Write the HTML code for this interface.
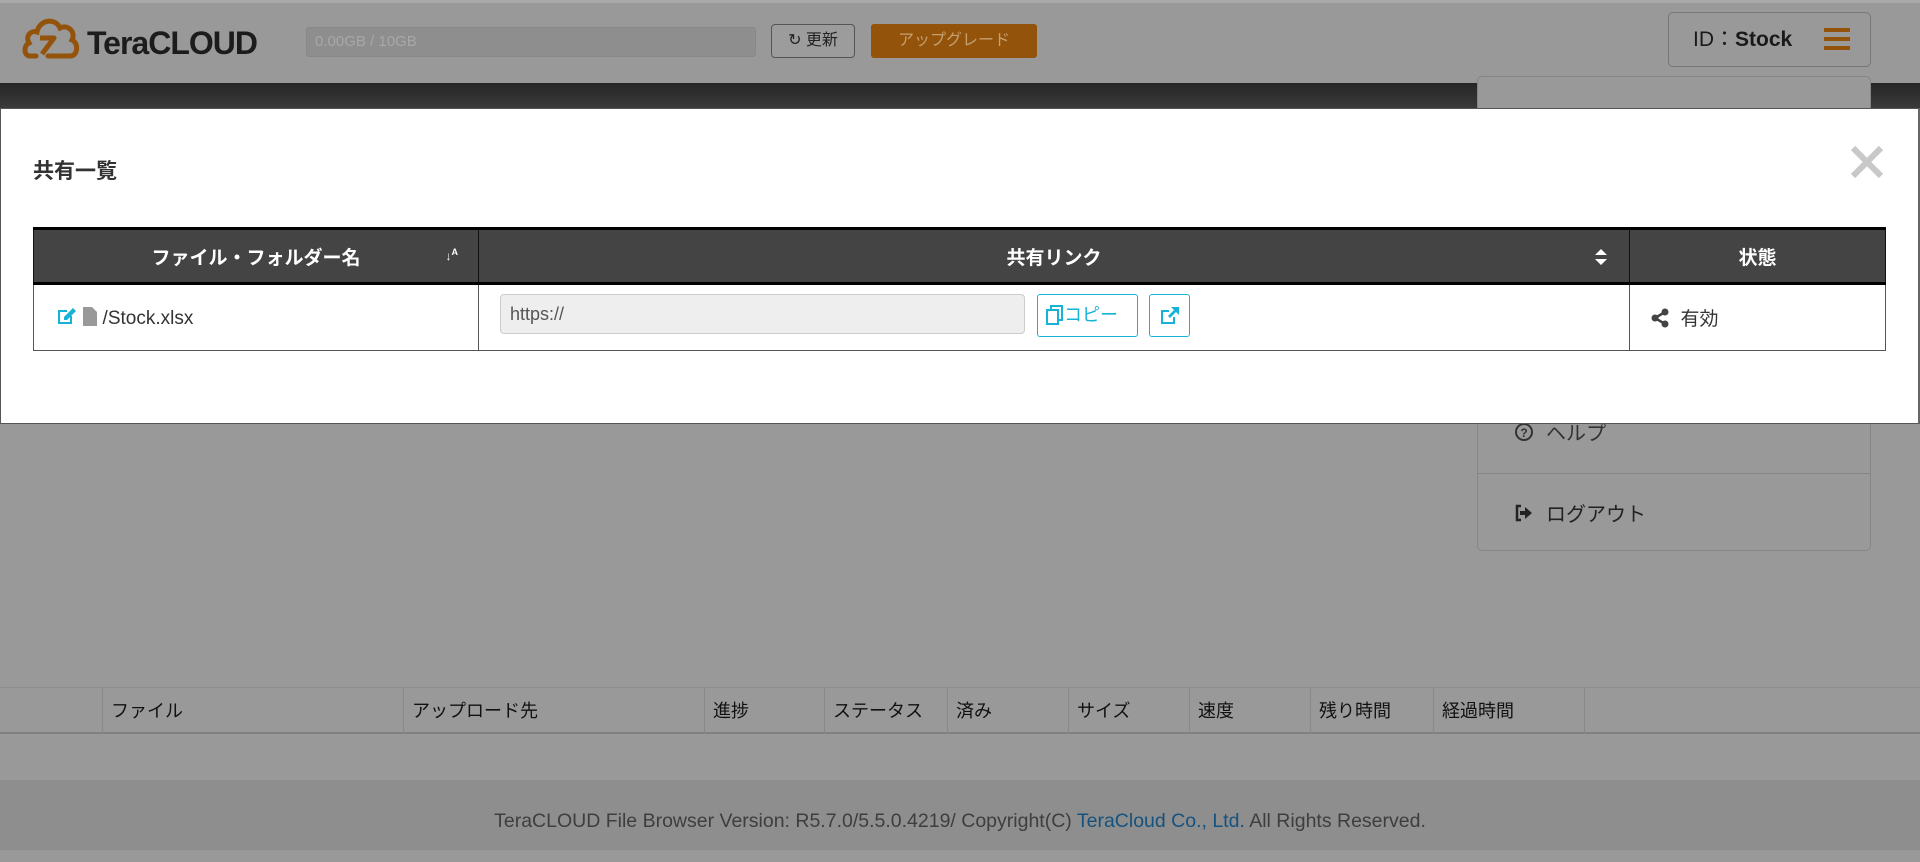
<!DOCTYPE html>
<html><head><meta charset="utf-8"><style>
*{box-sizing:border-box;margin:0;padding:0}
body{width:1920px;height:850px;overflow:hidden;background:#999;font-family:"Liberation Sans","Noto Sans CJK JP",sans-serif;position:relative;color:#222}
.abs{position:absolute}
.hdr{left:0;top:0;width:1920px;height:83px;background:#999;border-top:3px solid #aaa}
.tb{left:0;top:83px;width:1920px;height:25px;background:linear-gradient(#262626,#3a3a3a)}
.bar{left:306px;top:27px;width:450px;height:30px;background:#8e8e8e;border:1px solid #888;border-radius:3px;color:#a8a8a8;font-size:15px;line-height:28px;padding-left:8px}
.btn1{left:771px;top:24px;width:84px;height:34px;border:1px solid #555;border-radius:4px;background:#9c9c9c;font-size:16px;line-height:32px;text-align:center;color:#222}
.up{left:871px;top:24px;width:166px;height:34px;background:#94530a;border-radius:3px;color:#c4a070;font-size:16px;line-height:34px;text-align:center}
.id{left:1668px;top:12px;width:203px;height:55px;border:1px solid #777;border-radius:5px;font-size:21px;line-height:53px;padding-left:24px;color:#1a1a1a}
.menu{left:1477px;top:76px;width:394px;height:475px;border:1px solid #858585;border-radius:5px;background:#999}
.modal{left:0;top:108px;width:1920px;height:316px;background:#fff;border:1px solid #555;border-right:2px solid #666}
table{position:absolute;left:33px;top:227px;width:1853px;border-collapse:collapse;font-size:19px}
th{background:#444;color:#fff;height:55px;border:1px solid #111;border-top:3px solid #000;border-bottom:3px solid #000;font-weight:bold;position:relative}
td{height:67px;border:1px solid #555;vertical-align:middle}
.cb{border:1px solid #17b3d6;border-radius:3px;color:#17b3d6;height:43px;position:absolute;top:294px;background:#fff}
.ul{left:0;top:687px;width:1920px;height:47px;border-top:1px solid #8e8e8e;border-bottom:2px solid #808080;font-size:18px;color:#111}
.ul span{position:absolute;top:0;height:46px;line-height:46px;border-left:1px solid #888;padding-left:8px}
.ft{left:0;top:780px;width:1920px;height:70px;background:#8e8e8e;text-align:center;font-size:19.5px;line-height:82px;color:#3e3e3e}
</style></head><body>
<div class="abs hdr"></div>
<svg class="abs" style="left:22px;top:12px" width="60" height="50" viewBox="0 0 60 50"><path d="M14 44 H8 C2 44 1 34 7 31 C3 24 9 18 15 20 C17 8 33 5 38 16 C46 12 54 20 50 28 C57 31 56 44 48 44 H26" fill="none" stroke="#94530a" stroke-width="5" stroke-linecap="round"/><path d="M18 26 H32 L20 42" fill="none" stroke="#94530a" stroke-width="5" stroke-linejoin="round"/></svg>
<div class="abs" style="left:87px;top:25px;font-size:32px;font-weight:bold;color:#1c1c1c;letter-spacing:-1px">TeraCLOUD</div>
<div class="abs bar">0.00GB / 10GB</div>
<div class="abs btn1">&#x21bb; 更新</div>
<div class="abs up">アップグレード</div>
<div class="abs id">ID：<b>Stock</b><span style="position:absolute;left:155px;top:15px;width:26px;height:22px;border-top:4px solid #94530a;border-bottom:4px solid #94530a"><span style="position:absolute;top:5px;left:0;width:26px;height:4px;background:#94530a"></span></span></div>
<div class="abs tb"></div>
<div class="abs menu">
<div style="position:absolute;left:0;top:396px;width:392px;border-top:1px solid #858585"></div>
<svg style="position:absolute;left:36px;top:345px" width="20" height="20" viewBox="0 0 20 20"><circle cx="10" cy="10" r="8" fill="none" stroke="#333" stroke-width="2"/><text x="10" y="15" font-size="12" font-weight="bold" text-anchor="middle" fill="#333" font-family="Liberation Sans">?</text></svg>
<div style="position:absolute;left:68px;top:340px;font-size:20px;color:#333">ヘルプ</div>
<svg style="position:absolute;left:36px;top:426px" width="20" height="20" viewBox="0 0 20 20"><path d="M7 3H3V17H7" fill="none" stroke="#222" stroke-width="2.5"/><path d="M6 8H11V4L18 10L11 16V12H6Z" fill="#222"/></svg>
<div style="position:absolute;left:68px;top:421px;font-size:20px;color:#222">ログアウト</div>
</div>
<div class="abs modal"></div>
<div class="abs" style="left:33px;top:155px;font-size:21px;font-weight:bold;color:#333">共有一覧</div>
<svg class="abs" style="left:1850px;top:145px" width="34" height="34" viewBox="0 0 34 34"><path d="M3 3L31 31M31 3L3 31" stroke="#c8c8c8" stroke-width="6"/></svg>
<table>
<tr><th style="width:445px">ファイル・フォルダー名<span style="position:absolute;right:20px;top:17px;font-size:12px;line-height:10px;text-align:left">↓<sup style="font-size:9px">A</sup><br></span></th><th style="width:1151px">共有リンク<svg style="position:absolute;right:22px;top:19px" width="12" height="16" viewBox="0 0 12 16"><path d="M6 0L12 6H0ZM6 16L0 10H12Z" fill="#fff"/></svg></th><th>状態</th></tr>
<tr><td style="padding-left:22px;color:#333"><svg width="22" height="20" viewBox="0 0 22 20" style="vertical-align:-2px"><path d="M2 4H11V6H4V16H14V10H16V18H2Z" fill="#17b3d6"/><path d="M8 11L17 2L20 5L11 14H8Z" fill="#17b3d6"/></svg> <svg width="14" height="19" viewBox="0 0 14 19" style="vertical-align:-2px"><path d="M0 0H9L14 5V19H0Z" fill="#999"/></svg> /Stock.xlsx</td><td></td><td style="padding-left:20px;color:#333"><svg width="20" height="20" viewBox="0 0 20 20" style="vertical-align:-3px"><path d="M15 4L5 10L15 16" stroke="#444" stroke-width="2.5" fill="none"/><circle cx="15" cy="4" r="3.5" fill="#444"/><circle cx="5" cy="10" r="3.5" fill="#444"/><circle cx="15" cy="16" r="3.5" fill="#444"/></svg>&nbsp; 有効</td></tr>
</table>
<div class="abs" style="left:500px;top:294px;width:525px;height:40px;background:#eee;border:1px solid #ccc;border-radius:4px;font-size:18px;line-height:38px;padding-left:9px;color:#555">https://</div>
<div class="abs cb" style="left:1037px;width:101px;font-size:18px;line-height:41px;padding-left:8px"><svg width="18" height="20" viewBox="0 0 18 20" style="vertical-align:-4px"><path d="M5 4V1H16V15H13" fill="none" stroke="#17b3d6" stroke-width="2"/><rect x="1" y="5" width="11" height="14" fill="none" stroke="#17b3d6" stroke-width="2"/></svg>コピー</div>
<div class="abs cb" style="left:1149px;width:41px;text-align:center;padding-top:11px"><svg width="22" height="20" viewBox="0 0 22 20"><path d="M2 4H10V6H4V16H14V11H16V18H2Z" fill="#17b3d6"/><path d="M12 1H20V9L17 6L11 12L9 10L15 4Z" fill="#17b3d6"/></svg></div>
<div class="abs ul">
<span style="left:102px">ファイル</span><span style="left:403px">アップロード先</span><span style="left:704px">進捗</span><span style="left:824px">ステータス</span><span style="left:947px">済み</span><span style="left:1068px">サイズ</span><span style="left:1189px">速度</span><span style="left:1310px">残り時間</span><span style="left:1433px">経過時間</span><span style="left:1584px"></span>
</div>
<div class="abs ft">TeraCLOUD File Browser Version: R5.7.0/5.5.0.4219/ Copyright(C) <span style="color:#15527e">TeraCloud Co., Ltd.</span> All Rights Reserved.</div>
</body></html>
